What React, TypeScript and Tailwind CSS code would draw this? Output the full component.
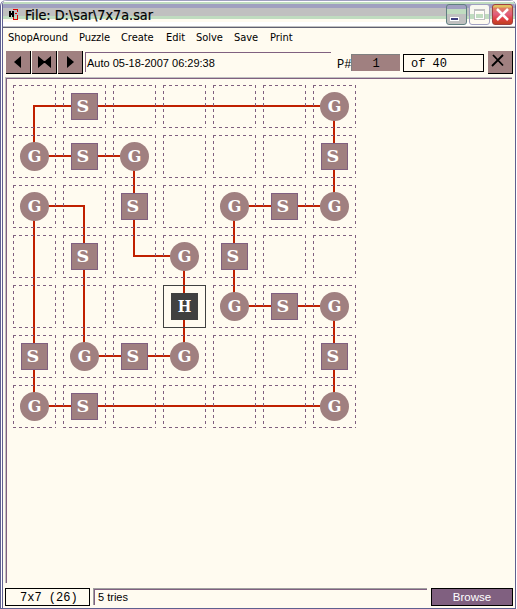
import React from "react";

const path: [number, number, number, number][] = [
  [0, 0, 6, 0], [0, 0, 0, 1], [0, 1, 2, 1], [2, 1, 2, 3], [2, 3, 3, 3], [3, 3, 3, 5], [1, 5, 3, 5],
  [1, 2, 1, 5], [0, 2, 1, 2], [0, 2, 0, 6], [0, 6, 6, 6], [6, 4, 6, 6], [4, 4, 6, 4], [4, 2, 4, 4],
  [4, 2, 6, 2], [6, 0, 6, 2],
];

const rows = [
  ".S....G",
  "GSG...S",
  "G.S.GSG",
  ".S.GS..",
  "...HGSG",
  "SGSG..S",
  "GS....G",
];

const letter = "font-['DejaVu_Serif',serif] text-[16px] leading-none font-bold text-white";

function Node({ kind }: { kind: string }) {
  if (kind === "G")
    return (
      <div className={`relative z-10 mt-[7px] ml-[7px] flex size-[29px] items-center justify-center rounded-full bg-[#a08080] ${letter}`}>
        <span className="inline-block">G</span>
      </div>
    );
  if (kind === "S")
    return (
      <div className={`relative z-10 mt-2 ml-2 flex size-[27px] items-center justify-center border border-[#806080] bg-[#a08080] pr-[3px] ${letter}`}>
        <span className="inline-block scale-x-110">S</span>
      </div>
    );
  if (kind === "H")
    return (
      <div className={`relative z-10 mt-2 ml-2 flex size-[27px] items-center justify-center bg-[#404040] ${letter}`}>
        <span className="inline-block scale-x-90">H</span>
      </div>
    );
  return null;
}

function Cell({ kind }: { kind: string }) {
  return (
    <div className="relative size-[43px]">
      <svg className="absolute inset-0" width="43" height="43" shapeRendering="crispEdges">
        <path
          d="M0 .5H43M0 42.5H43M.5 0V43M42.5 0V43"
          stroke={kind === "H" ? "#404040" : "#806080"}
          strokeDasharray={kind === "H" ? undefined : "3 3"}
        />
      </svg>
      <div className="flex">
        <Node kind={kind} />
      </div>
    </div>
  );
}

function ToolButton({ children, className = "" }: { children: React.ReactNode; className?: string }) {
  return (
    <button className={`flex h-[23px] w-[25px] items-center justify-center border-r border-b border-black bg-[#a08080] ${className}`}>
      {children}
    </button>
  );
}

const menu: [string, string][] = [
  ["ShopAround", "w-[71px]"],
  ["Puzzle", "w-[42px]"],
  ["Create", "w-[45px]"],
  ["Edit", "w-[30px]"],
  ["Solve", "w-[38px]"],
  ["Save", "w-[36px]"],
  ["Print", "w-[30px]"],
];

export default function App() {
  return (
    <div className="h-[609px] w-[517px] overflow-hidden border-r border-white bg-white">
      <div className="h-[609px] w-[516px] overflow-hidden rounded-t-[6px] border border-t-0 border-[#606090] pl-px">
        <div className="flex h-[608px] w-[513px] flex-col overflow-hidden rounded-tl-[5px] border-l border-[#606090] bg-[#fffbf0] font-['Liberation_Sans',Arial,sans-serif] text-black">
          <header className="flex h-[28px] shrink-0 items-start border-b border-[#606070] bg-[linear-gradient(#a0a0c0_0_1px,#fff_1px_2px,#c0dcc0_2px_4px,#a0a0c0_4px_8px,#c0c0c0_8px_16px,#c0dcc0_16px_19px,#fffbf0_19px_22px,#fff_22px_26px,#c0c0c0_26px_27px)] pl-[6px]">
            <svg className="mt-[8px]" width="10" height="12" viewBox="0 0 10 12" shapeRendering="crispEdges">
              <path d="M1 3v6M4 3v6M1 6h4" stroke="#000" strokeWidth="2" fill="none" />
              <path d="M4 2V1H8V4M4 9v2H8V7M6 5.500H8" stroke="#e00000" fill="none" />
            </svg>
            <h1 className="mt-[6px] ml-[6px] grow font-['DejaVu_Sans_Condensed','DejaVu_Sans',sans-serif] text-[13.5px] leading-[18px] whitespace-nowrap">
              <svg width="140" height="18" className="block">
                <text x="0" y="14" textLength="128" lengthAdjust="spacingAndGlyphs" fill="#000" stroke="#000" strokeWidth=".2">File: D:\sar\7x7a.sar</text>
              </svg>
            </h1>
            <div className="mt-1 mr-[2px] flex gap-[2px]">
              <div className="size-[21px] rounded-[3px] border border-[#608080] bg-[linear-gradient(#a0a0c0_0_4px,#c0dcc0_4px_9px,#c0c0c0_9px)]">
                <div className="mt-[12px] ml-[3px] h-[4px] w-[9px] border border-white bg-[#404080]" />
              </div>
              <div className="size-[21px] rounded-[3px] border border-[#a0a0c0] bg-[linear-gradient(#f8f8f0_0_9px,#c0dcc0_9px_14px,#fffbf0_14px)]">
                <div className="mt-[4px] ml-[4px] size-[11px] border border-t-2 border-[#c0c0c0]">
                  <div className="size-full border border-white bg-[linear-gradient(#fffbf0_0_2px,#c0dcc0_2px)]" />
                </div>
              </div>
              <div className="flex size-[21px] items-center justify-center rounded-[3px] border border-[#a04040] bg-[linear-gradient(#e0c060_0_2px,#e08060_3px,#e06080_9px,#e04040_14px,#c04020)]">
                <svg width="13" height="13"><path d="M1 1l11 11M12 1L1 12" stroke="#fff" strokeWidth="2.5" /></svg>
              </div>
            </div>
          </header>

          <nav className="flex h-[20px] shrink-0 items-center pl-[5px] pt-px font-['DejaVu_Sans_Condensed','DejaVu_Sans',sans-serif] text-[11px] tracking-[-0.05px]">
            {menu.map(([name, width]) => (
              <span key={name} className={width}>{name}</span>
            ))}
          </nav>

          <div className="flex h-[29px] shrink-0 items-start pt-[3px] pl-[3px]">
            <div className="flex gap-px">
              <ToolButton><svg width="7" height="12" className="mr-[2px]"><path d="M7 0v12L0 6z" /></svg></ToolButton>
              <ToolButton><svg width="13" height="12"><path d="M0 0v12l6-5 1 0 6 5V0L7 5H6z" /></svg></ToolButton>
              <ToolButton><svg width="7" height="12"><path d="M0 0v12l7-6z" /></svg></ToolButton>
            </div>
            <div className="mt-px ml-[2px] h-[20px] w-[246px] border-t border-l border-[#806080] pl-px text-[11px] leading-[20px]">Auto 05-18-2007 06:29:38</div>
            <span className="mt-[7px] ml-[6px] w-[14px] font-['Liberation_Mono',monospace] text-[12px] leading-[14px]">P#</span>
            <div className="mt-[3px] h-[17px] w-[49px] border-t border-l border-[#808080] bg-[#a08080] text-center font-['Liberation_Mono',monospace] text-[12px] leading-[18px]">1</div>
            <div className="mt-[3px] ml-[3px] h-[18px] w-[81px] border border-black pl-[7px] font-['Liberation_Mono',monospace] text-[12px] leading-[18px]">of 40</div>
            <ToolButton className="ml-1"><svg width="14" height="13" className="mr-1 mb-[3px]"><path d="M2 1l10 10.500M12 1L1 12" stroke="#000" strokeWidth="1.8" /></svg></ToolButton>
          </div>

          <main className="ml-[2px] h-[506px] w-[507px] shrink-0 border-t border-l border-[#c0c0c0]">
            <div className="h-full border-t border-l border-[#806080] pt-[6px] pl-[6px]">
              <div className="relative grid w-fit grid-cols-7 gap-[7px]">
                <svg className="absolute inset-0" width="343" height="343" shapeRendering="crispEdges">
                  {path.map(([a, b, c, d]) => (
                    <path key={`${a}${b}${c}${d}`} d={`M${a * 50 + 21} ${b * 50 + 21}L${c * 50 + 21} ${d * 50 + 21}`} stroke="#c02000" strokeWidth="2" strokeLinecap="square" />
                  ))}
                </svg>
                {rows.flatMap((r, y) => r.split("").map((k, x) => <Cell key={`${x}${y}`} kind={k} />))}
              </div>
            </div>
          </main>

          <footer className="flex h-[25px] shrink-0 items-start pt-[5px] pl-[2px]">
            <div className="h-[18px] w-[85px] border border-black pl-[14px] font-['Liberation_Mono',monospace] text-[12px] leading-[18px]">7x7 (26)</div>
            <div className="ml-[3px] h-[17px] w-[334px] border-t border-l border-[#a0a0a0]">
              <div className="h-full border-t border-l border-[#806080] pl-[3px] text-[11px] leading-[15px]">5 tries</div>
            </div>
            <button className="ml-[4px] h-[18px] w-[82px] border border-black bg-[#806080] text-[11.5px] leading-[14px] text-white">Browse</button>
          </footer>
        </div>
      </div>
    </div>
  );
}
